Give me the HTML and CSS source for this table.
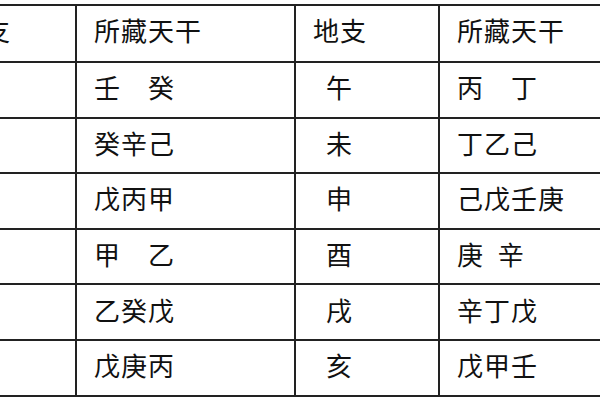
FILE: index.html
```html
<!DOCTYPE html>
<html lang="zh">
<head>
<meta charset="utf-8">
<link rel="stylesheet" href="styles.css">
</head>
<body>
<div class="sheet">
  <table class="grid">
    <colgroup>
      <col class="c1"><col class="c2"><col class="c3"><col class="c4">
    </colgroup>
    <tr class="head">
      <td>地支</td><td>所藏天干</td><td>地支</td><td>所藏天干</td>
    </tr>
    <tr>
      <td class="zhi">子</td><td>壬　癸</td><td class="zhi">午</td><td>丙　丁</td>
    </tr>
    <tr>
      <td class="zhi">丑</td><td>癸辛己</td><td class="zhi">未</td><td>丁乙己</td>
    </tr>
    <tr>
      <td class="zhi">寅</td><td>戊丙甲</td><td class="zhi">申</td><td>己戊壬庚</td>
    </tr>
    <tr>
      <td class="zhi">卯</td><td>甲　乙</td><td class="zhi">酉</td><td class="pre">庚  辛</td>
    </tr>
    <tr>
      <td class="zhi">辰</td><td>乙癸戊</td><td class="zhi">戌</td><td>辛丁戊</td>
    </tr>
    <tr>
      <td class="zhi">巳</td><td>戊庚丙</td><td class="zhi">亥</td><td>戊甲壬</td>
    </tr>
  </table>
</div>
</body>
</html>
```

FILE: styles.css
```css
html, body {
  margin: 0;
  padding: 0;
  background: #ffffff;
}

.sheet {
  width: 600px;
  height: 400px;
  overflow: hidden;
  padding-top: 4px;
  box-sizing: border-box;
}

.grid {
  border-collapse: collapse;
  table-layout: fixed;
  width: 722px;
  margin-left: -62px;
  font-family: "Noto Sans CJK SC", "Noto Sans CJK JP", sans-serif;
  font-size: 26px;
  letter-spacing: 1px;
  color: #111111;
}

.c1 { width: 137px; }
.c2 { width: 219px; }
.c3 { width: 144px; }
.c4 { width: 222px; }

.grid td {
  border: 2px solid #222222;
  border-right: none;
  padding: 0 0 5px 17px;
  height: 48.6px;
  vertical-align: middle;
  white-space: nowrap;
  line-height: 1;
}

.grid tr.head td {
  height: 48px;
  padding-bottom: 7px;
}

.grid td.zhi {
  padding-left: 30px;
}

.grid td.pre {
  white-space: pre;
}
```
